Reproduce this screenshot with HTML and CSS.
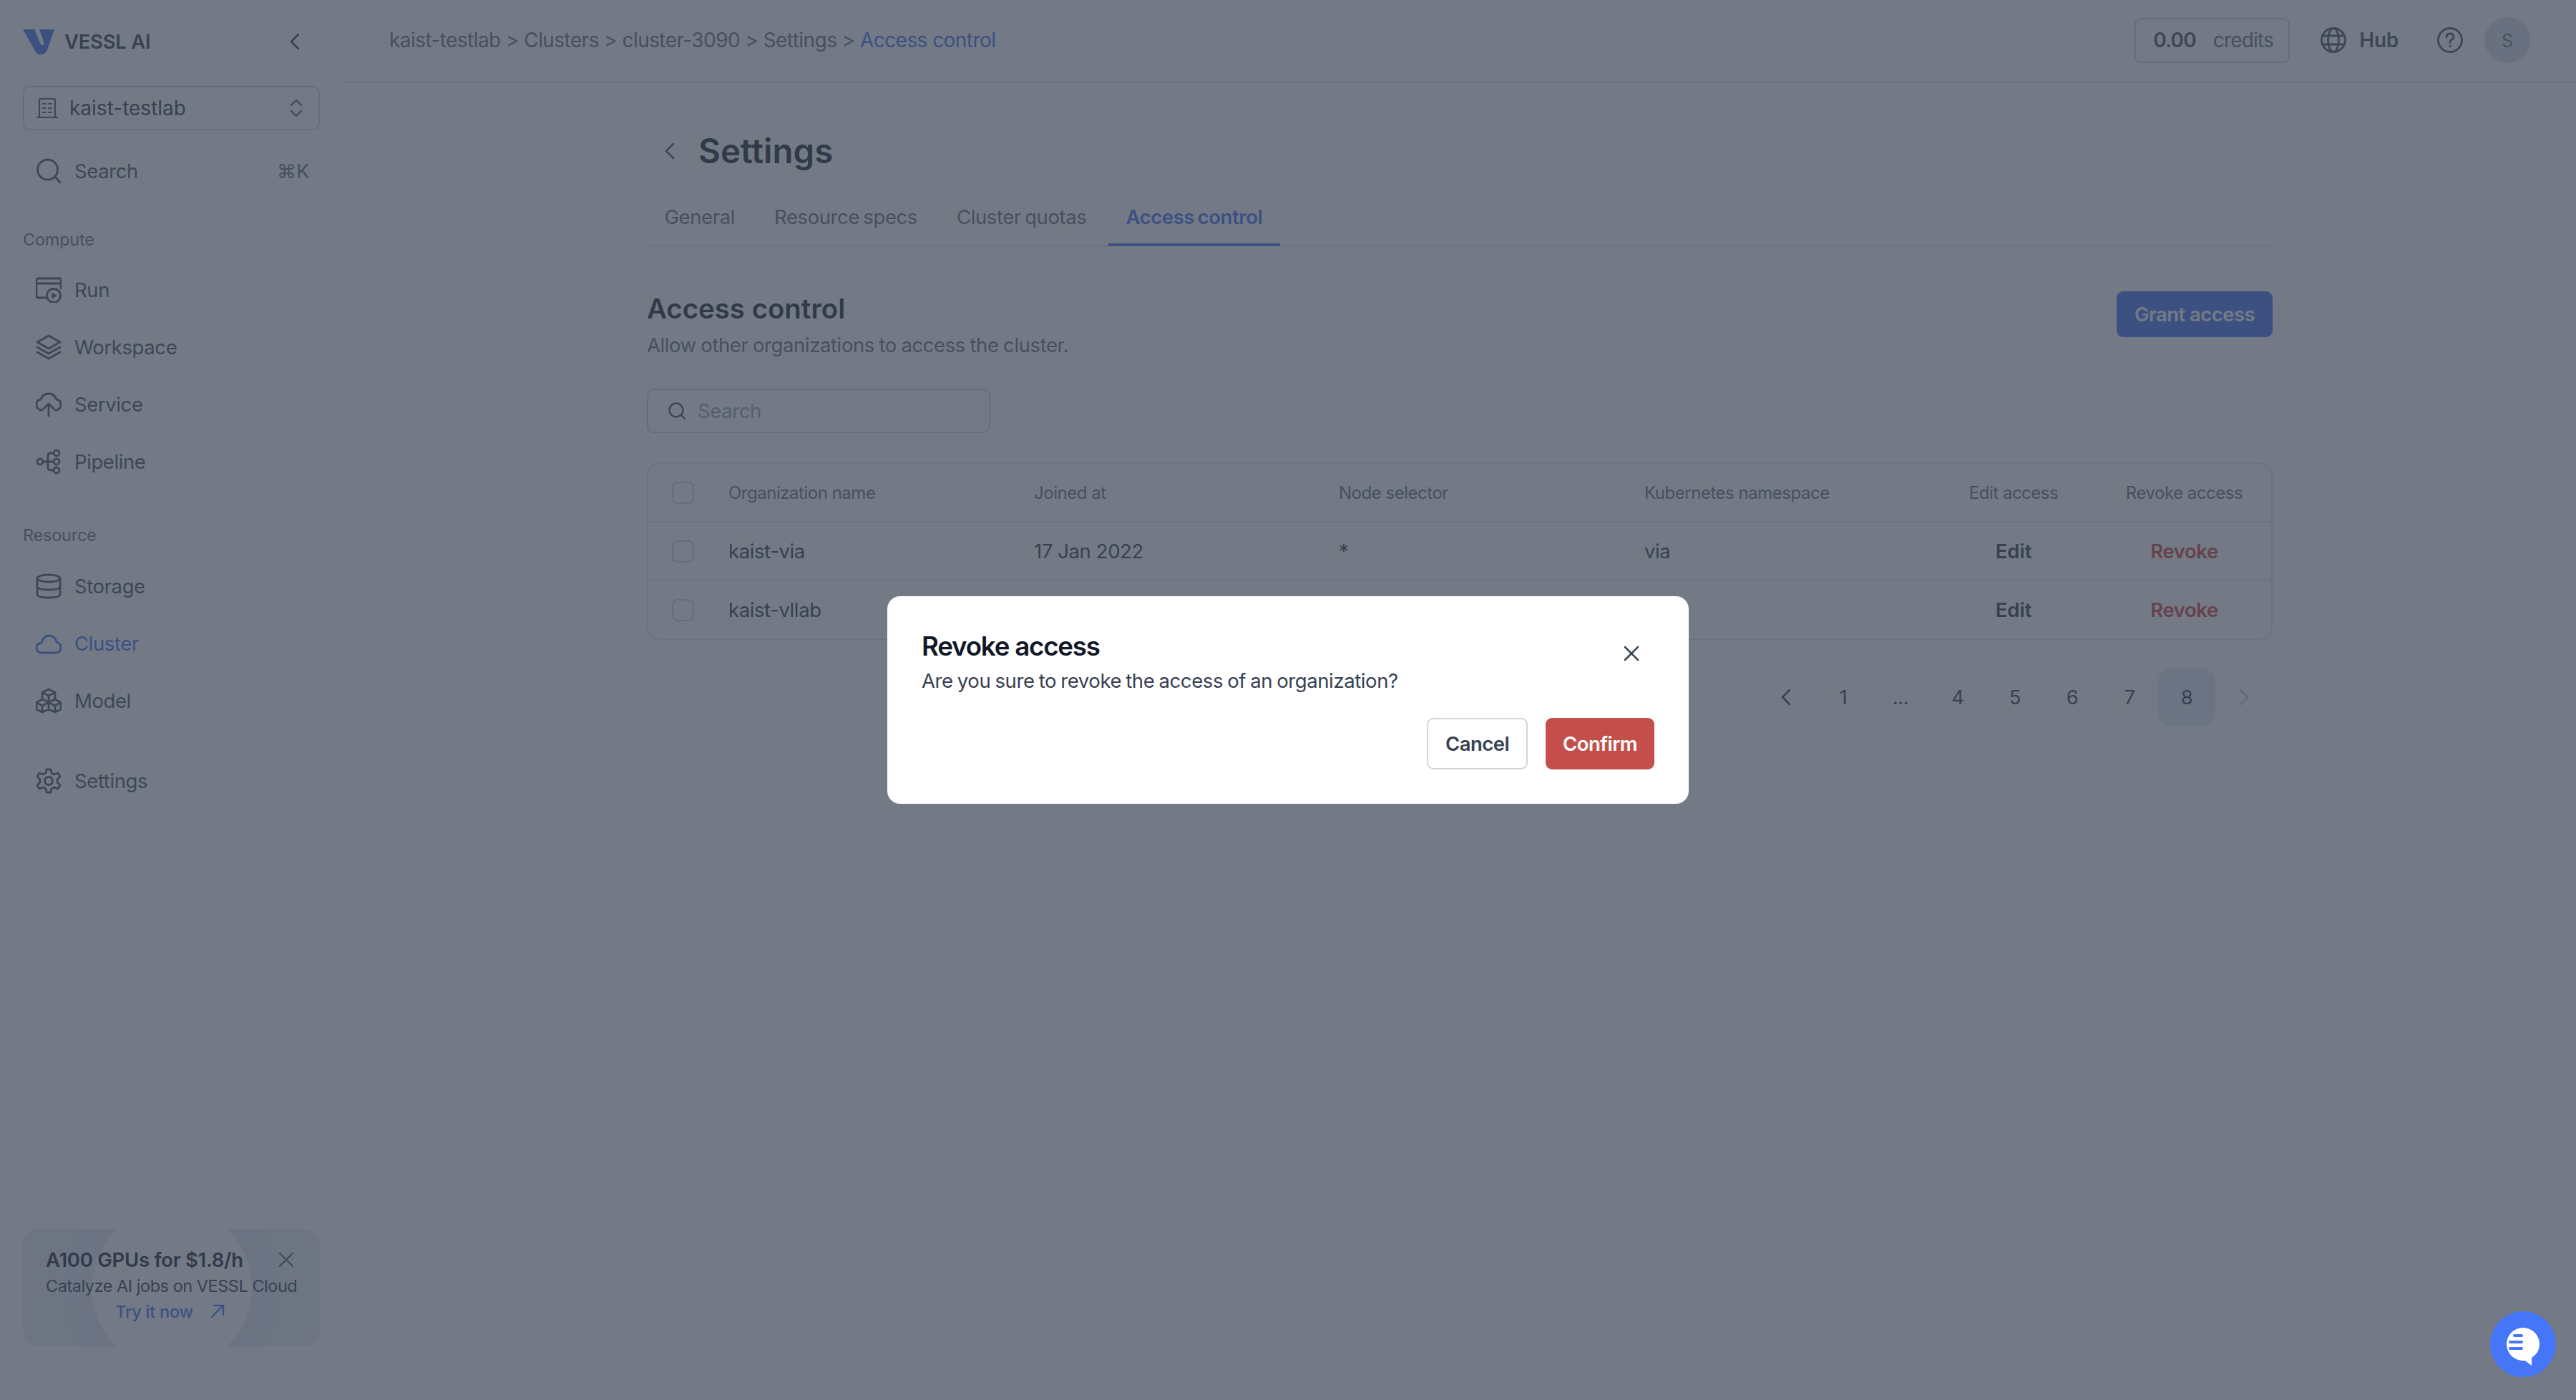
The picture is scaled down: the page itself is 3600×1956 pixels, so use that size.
FILE: index.html
```html
<!DOCTYPE html>
<html lang="en">
<head>
    <meta charset="UTF-8">
    <title>Access control - VESSL AI</title>
    <link rel="stylesheet" href="styles.css">
</head>
<body>
    <div class="app">
        <aside class="sidebar">
            <div class="brand">
                <svg class="logo" viewBox="0 0 44 35"><path d="M0 0H16L25 21Q27 24 30 20L23 0H44L34 29Q31 35 25 35Q19 35 17 30Z"/></svg>
                <span class="brand-name">VESSL AI</span>
                <svg class="collapse" viewBox="0 0 14 24"><path d="M12 2L2 12L12 22"/></svg>
            </div>

            <div class="org-select">
                <svg class="org-icon" viewBox="0 0 30 28"><path d="M4 26V3Q4 1 6 1H24Q26 1 26 3V26M1 27H29M9 8H13M17 8H21M9 14H13M17 14H21M9 20H13M17 20H21"/></svg>
                <span class="org-name">kaist-testlab</span>
                <svg class="updown" viewBox="0 0 18 26"><path d="M2 9L9 2L16 9M2 17L9 24L16 17"/></svg>
            </div>

            <div class="nav-item search-item">
                <svg class="icon" viewBox="0 0 36 36"><circle cx="16.500" cy="16" r="14"/><path d="M27 26L34 34"/></svg>
                <span>Search</span>
                <span class="shortcut">⌘K</span>
            </div>

            <div class="nav-label compute-label">Compute</div>
            <div class="nav-item">
                <svg class="icon" viewBox="0 0 36 36"><path d="M16 29H3Q1 29 1 27V4Q1 2 3 2H33Q35 2 35 4V16M1 9H35"/><circle cx="25" cy="26" r="9.500"/><path class="solid" d="M22.500 21.500L30 26L22.500 30.500Z"/></svg>
                <span>Run</span>
            </div>
            <div class="nav-item">
                <svg class="icon" viewBox="0 0 36 36"><path d="M18 2L34 11L18 20L2 11ZM2 18L18 27L34 18M2 25L18 34L34 25"/></svg>
                <span>Workspace</span>
            </div>
            <div class="nav-item">
                <svg class="icon" viewBox="0 0 36 36"><path d="M9 26H8Q1 25 1 18Q1 12 7 11Q10 3 18 3Q26 3 29 11Q35 12 35 18Q35 25 28 26H27M18 34V18M11 24L18 17L25 24"/></svg>
                <span>Service</span>
            </div>
            <div class="nav-item">
                <svg class="icon" viewBox="0 0 36 36"><circle cx="6" cy="18" r="4"/><circle cx="29" cy="6" r="4"/><circle cx="29" cy="18" r="4"/><circle cx="29" cy="30" r="4"/><path d="M10 18H25M25 6H21Q17 6 17 10V26Q17 30 21 30H25"/></svg>
                <span>Pipeline</span>
            </div>

            <div class="nav-label resource-label">Resource</div>
            <div class="nav-item">
                <svg class="icon" viewBox="0 0 36 36"><ellipse cx="18" cy="7" rx="16" ry="5"/><path d="M2 7V29Q2 34 18 34Q34 34 34 29V7M2 18Q2 23 18 23Q34 23 34 18"/></svg>
                <span>Storage</span>
            </div>
            <div class="nav-item active">
                <svg class="icon" viewBox="0 0 36 36"><path d="M9 31Q1 31 1 24Q1 18 8 17Q11 7 19 7Q27 7 29 16Q35 18 35 24Q35 31 28 31Z"/></svg>
                <span>Cluster</span>
            </div>
            <div class="nav-item">
                <svg class="icon" viewBox="0 0 36 36"><path d="M18 2L27 6.500V16L18 20L9 16V6.500ZM9 6.500L18 11L27 6.500M18 11V20M9 16L1 20.500V30L9 34L18 30L27 34L35 30V20.500L27 16M1 20.500L9 25L18 20.500L27 25L35 20.500M9 25V34M27 25V34M18 20V30"/></svg>
                <span>Model</span>
            </div>
            <div class="nav-item settings-item">
                <svg class="icon" viewBox="0 0 36 36"><circle cx="18" cy="18" r="5.500"/><path d="M15 2H21L22 7L26 9L31 7L34 12L30 16V20L34 24L31 29L26 27L22 29L21 34H15L14 29L10 27L5 29L2 24L6 20V16L2 12L5 7L10 9L14 7Z"/></svg>
                <span>Settings</span>
            </div>

            <div class="promo">
                <div class="promo-ring"></div>
                <div class="promo-circle"></div>
                <div class="promo-top">
                    <strong>A100 GPUs for $1.8/h</strong>
                    <svg class="promo-close" viewBox="0 0 20 20"><path d="M1 1L19 19M19 1L1 19"/></svg>
                </div>
                <p>Catalyze AI jobs on VESSL Cloud</p>
                <div class="promo-link">
                    <span>Try it now</span>
                    <svg viewBox="0 0 20 20"><path d="M2 18L18 2M5 2H18V15"/></svg>
                </div>
            </div>
        </aside>

        <main class="main">
            <header class="topbar">
                <div class="crumbs">kaist-testlab &gt; Clusters &gt; cluster-3090 &gt; Settings &gt; <span class="crumb-current">Access control</span></div>
                <div class="top-actions">
                    <div class="credits"><b>0.00</b><span>credits</span></div>
                    <div class="hub">
                        <svg class="top-icon" viewBox="0 0 36 36"><circle cx="18" cy="18" r="16.500"/><ellipse cx="18" cy="18" rx="7.500" ry="16.500"/><path d="M2.500 12H33.500M2.500 24H33.500"/></svg>
                        <span>Hub</span>
                    </div>
                    <svg class="top-icon help" viewBox="0 0 36 36"><circle cx="18" cy="18" r="16.500"/><path d="M13 14Q13 9 18 9Q23 9 23 13.500Q23 16 20 17.500Q18 18.500 18 21.500"/><circle class="solid" cx="18" cy="26.500" r="1.500"/></svg>
                    <div class="avatar">S</div>
                </div>
            </header>

            <div class="content">
                <div class="page-title">
                    <svg class="back" viewBox="0 0 14 24"><path d="M12 2L2 12L12 22"/></svg>
                    <h1>Settings</h1>
                </div>

                <nav class="tabs">
                    <a class="tab">General</a>
                    <a class="tab">Resource specs</a>
                    <a class="tab">Cluster quotas</a>
                    <a class="tab tab-active">Access control</a>
                </nav>

                <div class="section-head">
                    <div>
                        <h2>Access control</h2>
                        <p>Allow other organizations to access the cluster.</p>
                    </div>
                    <button class="btn-grant">Grant access</button>
                </div>

                <div class="search-box">
                    <svg viewBox="0 0 26 26"><circle cx="12" cy="12" r="9.500"/><path d="M19 19L24 24"/></svg>
                    <span>Search</span>
                </div>

                <div class="table">
                    <div class="row row-head">
                        <div class="cell"><span class="check"></span></div>
                        <div class="cell">Organization name</div>
                        <div class="cell">Joined at</div>
                        <div class="cell">Node selector</div>
                        <div class="cell">Kubernetes namespace</div>
                        <div class="cell center">Edit access</div>
                        <div class="cell center last">Revoke access</div>
                    </div>
                    <div class="row">
                        <div class="cell"><span class="check"></span></div>
                        <div class="cell">kaist-via</div>
                        <div class="cell">17 Jan 2022</div>
                        <div class="cell">*</div>
                        <div class="cell">via</div>
                        <div class="cell center edit">Edit</div>
                        <div class="cell center last revoke">Revoke</div>
                    </div>
                    <div class="row">
                        <div class="cell"><span class="check"></span></div>
                        <div class="cell">kaist-vllab</div>
                        <div class="cell"></div>
                        <div class="cell"></div>
                        <div class="cell"></div>
                        <div class="cell center edit">Edit</div>
                        <div class="cell center last revoke">Revoke</div>
                    </div>
                </div>

                <div class="pagination">
                    <span class="page"><svg viewBox="0 0 14 24"><path d="M12 2L2 12L12 22"/></svg></span>
                    <span class="page">1</span>
                    <span class="page">...</span>
                    <span class="page">4</span>
                    <span class="page">5</span>
                    <span class="page">6</span>
                    <span class="page">7</span>
                    <span class="page page-current">8</span>
                    <span class="page page-off"><svg viewBox="0 0 14 24"><path d="M2 2L12 12L2 22"/></svg></span>
                </div>
            </div>
        </main>
    </div>

    <div class="overlay">
        <div class="modal">
            <svg class="modal-close" viewBox="0 0 22 22"><path d="M2 2L20 20M20 2L2 20"/></svg>
            <h3>Revoke access</h3>
            <p>Are you sure to revoke the access of an organization?</p>
            <div class="modal-actions">
                <button class="btn-cancel">Cancel</button>
                <button class="btn-confirm">Confirm</button>
            </div>
        </div>
    </div>

    <div class="chat">
        <svg viewBox="0 0 46 54"><path class="bubble" d="M23 0A23 23 0 0 1 46 23Q46 35 35 42V53L26 46Q24.500 46 23 46A23 23 0 0 1 23 0Z"/><path class="lines" d="M11 11H21M5 20H21M5 29H21"/></svg>
    </div>
</body>
</html>
```

FILE: styles.css
```css
* {
    box-sizing: border-box;
}
html, body {
    margin: 0;
    height: 100%;
}
body {
    font-family: Inter, "Noto Sans", sans-serif;
    background-color: #fff;
    color: #4b5563;
    overflow: hidden;
    letter-spacing: -0.025em;
}
svg {
    fill: none;
    stroke: currentColor;
    stroke-linecap: round;
    stroke-linejoin: round;
    flex-shrink: 0;
}
.solid {
    fill: currentColor;
    stroke: none;
}
.app {
    display: flex;
    height: 100vh;
}

/* sidebar */
.sidebar {
    width: 480px;
    flex-shrink: 0;
    display: flex;
    flex-direction: column;
    padding: 0 33px 75px 32px;
}
.brand {
    height: 116px;
    display: flex;
    align-items: center;
    padding-right: 28px;
}
.logo {
    width: 44px;
    height: 35px;
    fill: #4673f6;
    stroke: none;
}
.brand-name {
    margin-left: 14px;
    font-size: 27.500px;
    font-weight: 600;
    color: #374151;
    letter-spacing: -0.01em;
}
.collapse {
    width: 14px;
    height: 24px;
    margin-left: auto;
    stroke-width: 2.500;
    color: #374151;
}
.org-select {
    height: 62px;
    margin-top: 4px;
    display: flex;
    align-items: center;
    border: 2px solid #d1d5db;
    border-radius: 9px;
    padding: 0 22px 0 17px;
}
.org-icon {
    width: 30px;
    height: 28px;
    stroke-width: 2.200;
}
.org-name {
    margin-left: 16px;
    font-size: 28px;
    letter-spacing: 0;
    color: #374151;
}
.updown {
    width: 18px;
    height: 26px;
    margin-left: auto;
    stroke-width: 2.200;
}
.nav-item {
    height: 80px;
    display: flex;
    align-items: center;
    padding-left: 18px;
    font-size: 27.500px;
    gap: 18px;
}
.nav-item .icon {
    width: 36px;
    height: 36px;
    stroke-width: 2.800;
}
.nav-item.active {
    color: #4673f6;
}
.search-item {
    margin-top: 17px;
}
.shortcut {
    margin-left: auto;
    padding-right: 15px;
    color: #6b7280;
}
.nav-label {
    height: 34px;
    line-height: 34px;
    font-size: 23.500px;
    letter-spacing: -0.01em;
    color: #6b7280;
}
.compute-label {
    margin-top: 39px;
    margin-bottom: 13px;
}
.resource-label {
    margin-top: 46px;
    margin-bottom: 14px;
}
.settings-item {
    margin-top: 32px;
}
.promo {
    position: relative;
    overflow: hidden;
    margin-top: auto;
    height: 164px;
    border-radius: 22px;
    background-color: #eeeff4;
    padding: 29px 32px;
    color: #374151;
}
.promo-ring, .promo-circle {
    position: absolute;
    border-radius: 50%;
}
.promo-ring {
    width: 304px;
    height: 304px;
    left: 56px;
    top: -70px;
    background-color: #e6ebfb;
}
.promo-circle {
    width: 224px;
    height: 224px;
    left: 96px;
    top: -30px;
    background-color: #fff;
}
.promo-top, .promo p, .promo-link {
    position: relative;
}
.promo-top {
    display: flex;
    align-items: center;
    justify-content: space-between;
    height: 28px;
    padding-right: 5px;
}
.promo-top strong {
    font-size: 27.500px;
    font-weight: 600;
    letter-spacing: -0.01em;
    color: #1f2937;
}
.promo-close {
    width: 20px;
    height: 20px;
    stroke-width: 2;
    color: #4b5563;
}
.promo p {
    margin: 8px 0 0;
    font-size: 23.500px;
    letter-spacing: -0.02em;
    line-height: 30px;
    white-space: nowrap;
}
.promo-link {
    margin-top: 5px;
    display: flex;
    align-items: center;
    justify-content: center;
    gap: 24px;
    height: 30px;
    font-size: 23.500px;
    letter-spacing: -0.01em;
    font-weight: 500;
    color: #4673f6;
    padding-right: 4px;
}
.promo-link svg {
    width: 20px;
    height: 20px;
    stroke-width: 2.400;
}

/* top bar */
.main {
    flex: 1;
    min-width: 0;
}
.topbar {
    height: 116px;
    display: flex;
    align-items: center;
    justify-content: space-between;
    border-bottom: 2px solid #e5e7eb;
    padding: 0 64px 2px 64px;
}
.crumbs {
    font-size: 28px;
    letter-spacing: -0.02em;
    color: #6b7280;
}
.crumb-current {
    color: #4673f6;
}
.top-actions {
    display: flex;
    align-items: center;
}
.credits {
    width: 217px;
    height: 63px;
    display: flex;
    align-items: center;
    gap: 24px;
    padding-left: 24px;
    border: 2px solid #d1d5db;
    border-radius: 9px;
    font-size: 28px;
    letter-spacing: -0.03em;
    color: #6b7280;
}
.credits b {
    font-weight: 600;
    color: #4b5563;
}
.hub {
    display: flex;
    align-items: center;
    gap: 18px;
    margin-left: 43px;
    font-size: 28px;
    letter-spacing: -0.01em;
    font-weight: 600;
}
.top-icon {
    width: 36px;
    height: 36px;
    stroke-width: 2.800;
}
.help {
    margin-left: 54px;
}
.avatar {
    width: 64px;
    height: 64px;
    margin-left: 30px;
    border-radius: 50%;
    background-color: #dde2ee;
    display: flex;
    align-items: center;
    justify-content: center;
    font-size: 25.300px;
    color: #6b7280;
}

/* page */
.content {
    width: 2272px;
    margin: 0 auto;
    padding-top: 62px;
}
.page-title {
    display: flex;
    align-items: center;
    height: 64px;
    padding-left: 25px;
    gap: 33px;
}
.back {
    width: 14px;
    height: 24px;
    margin-top: 2px;
    stroke-width: 2.500;
}
h1 {
    margin: 0;
    font-size: 47.500px;
    font-weight: 600;
    letter-spacing: 0;
    color: #1f2937;
}
.tabs {
    display: flex;
    gap: 6px;
    margin-top: 24px;
    border-bottom: 2px solid #e5e7eb;
}
.tab {
    height: 78px;
    padding: 0 24.500px 5px;
    margin-bottom: -2px;
    display: flex;
    align-items: center;
    font-size: 27.500px;
    word-spacing: -2px;
    color: #6b7280;
}
.tab-active {
    color: #4673f6;
    font-weight: 600;
    letter-spacing: -0.015em;
    border-bottom: 4px solid #4673f6;
    padding-bottom: 1px;
}
.section-head {
    display: flex;
    justify-content: space-between;
    align-items: flex-start;
    margin-top: 63px;
}
h2 {
    margin: 0;
    height: 48px;
    line-height: 48px;
    font-size: 38.400px;
    font-weight: 600;
    letter-spacing: 0;
    color: #1f2937;
}
.section-head p {
    margin: 8px 0 0;
    line-height: 38px;
    font-size: 27.500px;
    word-spacing: -0.800px;
    color: #6b7280;
}
.btn-grant {
    width: 218px;
    height: 64px;
    border: none;
    border-radius: 9px;
    background-color: #4673f6;
    color: #fff;
    font: 600 27.500px Inter, sans-serif;
    letter-spacing: -0.02em;
}
.search-box {
    width: 480px;
    height: 62px;
    margin-top: 42px;
    display: flex;
    align-items: center;
    gap: 16px;
    padding-left: 27px;
    border: 2px solid #d1d5db;
    border-radius: 9px;
    font-size: 27.500px;
    color: #9ca3af;
}
.search-box svg {
    width: 26px;
    height: 26px;
    stroke-width: 2.400;
    color: #4b5563;
}
.table {
    margin-top: 41px;
    border: 2px solid #e5e7eb;
    border-radius: 18px;
}
.row {
    display: grid;
    grid-template-columns: 112px 427px 426px 427px 427px 178px 1fr;
    height: 82px;
    font-size: 27.500px;
    color: #374151;
    border-top: 2px solid #e5e7eb;
}
.row-head {
    height: 80px;
    border-top: none;
    font-size: 24px;
    letter-spacing: -0.02em;
    color: #6b7280;
}
.cell {
    display: flex;
    align-items: center;
    white-space: nowrap;
}
.center {
    justify-content: center;
}
.last {
    padding-left: 28px;
}
.check {
    width: 31px;
    height: 31px;
    margin-left: 33px;
    border: 2px solid #d1d5db;
    border-radius: 8px;
}
.edit {
    font-weight: 600;
    letter-spacing: 0;
}
.revoke {
    font-weight: 600;
    color: #d14343;
}
.pagination {
    display: flex;
    justify-content: flex-end;
    margin-top: 40px;
}
.page {
    width: 80px;
    height: 80px;
    display: flex;
    align-items: center;
    justify-content: center;
    border-radius: 18px;
    font-size: 27.500px;
    color: #374151;
}
.page svg {
    width: 14px;
    height: 24px;
    stroke-width: 2.500;
}
.page-current {
    background-color: #e5e9f4;
}
.page-off {
    color: #c6cad3;
}

/* revoke dialog */
.overlay {
    position: fixed;
    inset: 0;
    background-color: rgba(55, 65, 81, 0.7);
    display: flex;
    align-items: center;
    justify-content: center;
}
.modal {
    position: relative;
    width: 1120px;
    height: 290px;
    border-radius: 18px;
    background-color: #fff;
    padding: 48px;
}
.modal h3 {
    margin: 0;
    height: 44px;
    line-height: 44px;
    font-size: 36.700px;
    font-weight: 600;
    letter-spacing: -0.033em;
    color: #111827;
}
.modal p {
    margin: 7px 0 0;
    line-height: 38px;
    font-size: 27.500px;
    word-spacing: -1.200px;
    color: #374151;
}
.modal-close {
    position: absolute;
    top: 69px;
    right: 69px;
    width: 22px;
    height: 22px;
    stroke-width: 2.500;
    color: #374151;
}
.modal-actions {
    display: flex;
    justify-content: flex-end;
    gap: 25px;
    margin-top: 33px;
}
.modal-actions button {
    height: 72px;
    border-radius: 9px;
    font: 600 27.500px Inter, sans-serif;
    letter-spacing: -0.02em;
}
.btn-cancel {
    width: 141px;
    background-color: #fff;
    border: 2px solid #d1d5db;
    color: #374151;
}
.btn-confirm {
    width: 152px;
    background-color: #c44f4a;
    border: none;
    color: #fff;
}

/* chat launcher */
.chat {
    position: fixed;
    right: 28px;
    bottom: 32px;
    width: 92px;
    height: 92px;
    border-radius: 50%;
    background-color: #4676f8;
    display: flex;
    align-items: center;
    justify-content: center;
}
.chat svg {
    width: 46px;
    height: 54px;
    margin-top: 8px;
    stroke: none;
}
.bubble {
    fill: #fff;
}
.lines {
    fill: none;
    stroke: #4676f8;
    stroke-width: 4;
}
```
